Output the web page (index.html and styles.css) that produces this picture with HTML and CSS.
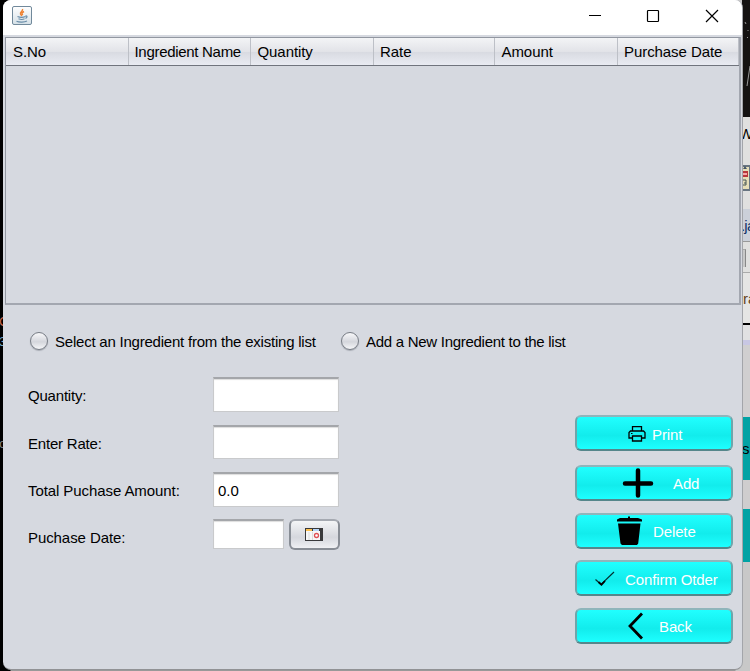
FILE: index.html
```
<!DOCTYPE html>
<html lang="en">
<head>
<meta charset="utf-8">
<title>Ingredient purchases</title>
<link rel="stylesheet" href="styles.css">
</head>
<body>
<div class="desktop">
  <div class="left-edge"><span class="edge-red">C</span><span class="edge-blue">3</span><span class="edge-gray">o</span></div>
  <main class="window">
    <header class="titlebar">
      <svg class="java" width="20" height="20" viewBox="0 0 20 20">
        <defs><linearGradient id="tile" x1="0" y1="0" x2="0" y2="1"><stop offset="0" stop-color="#fff"/><stop offset="1" stop-color="#d5e0e7"/></linearGradient></defs>
        <rect x=".5" y=".5" width="19" height="18" rx="1.5" fill="url(#tile)" stroke="#71899b"/>
        <path d="M10.500 3c1 2-3 3-2 5 .4 1 1 1.500 1.500 2M12 5.500c-3 1.500-2 2-1.300 3.500" fill="none" stroke="#ee8130" stroke-width="1.400"/>
        <path d="M5.500 10.500c2 .8 6 .8 8 0M6.500 12.800c2 .8 4.500.8 6 0M4.500 15.300c3 1.300 8 1 10.500-.3M13.500 10c2-.3 2 1.500 0 2.500" fill="none" stroke="#6b8ea9" stroke-width="1.200"/>
      </svg>
      <div class="controls">
        <svg width="14" height="14" viewBox="0 0 14 14"><path d="M1 9.500h12" stroke="#000"/></svg>
        <svg width="14" height="14" viewBox="0 0 14 14"><rect x=".5" y="4.500" width="11" height="11" rx=".8" fill="none" stroke="#000" stroke-width="1.200"/></svg>
        <svg width="14" height="14" viewBox="0 0 14 14"><path d="M1 4l12 12M13 4L1 16" stroke="#000" stroke-width="1.200"/></svg>
      </div>
    </header>
    <section class="table">
      <div class="thead"><div>S.No</div><div class="tight">Ingredient Name</div><div>Quantity</div><div class="pull">Rate</div><div>Amount</div><div class="pull">Purchase Date</div></div>
    </section>
    <section class="choices">
      <div class="choice first"><i class="radio"></i><span>Select an Ingredient from the existing list</span></div>
      <div class="choice second"><i class="radio"></i><span>Add a New Ingredient to the list</span></div>
    </section>
    <section class="lower">
      <div class="form">
        <div class="row"><label class="snug">Quantity:</label><div class="field"></div></div>
        <div class="row"><label class="snug">Enter Rate:</label><div class="field"></div></div>
        <div class="row"><label>Total Puchase Amount:</label><div class="field">0.0</div></div>
        <div class="row date"><label>Puchase Date:</label><div class="field short"></div>
          <div class="picker">
            <svg width="18" height="13" viewBox="0 0 18 13"><path fill="#39393b" d="M0 0h18v13H0z"/><path fill="#f7f7f7" d="M1 3h14v9H1z"/><path fill="#ffc14d" d="M1 1h6v2H1z"/><path fill="#b7d6fa" d="M8 1h6v2H8z"/><path d="M4 4v8M7.500 4v8" stroke="#ddd"/><circle cx="11.500" cy="7.500" r="2" fill="#fff" stroke="#df5054" stroke-width="1.300"/></svg>
          </div>
        </div>
      </div>
      <div class="actions">
        <div class="btn print"><svg width="18" height="16" viewBox="0 0 18 16"><path d="M4.500 5V.7h9V5M4 12H1V6.500L2.500 5h13L17 6.500V12h-3M4.500 10h9v5h-9z" fill="none" stroke="#000" stroke-width="1.300"/><path d="M3 7.500h1.500" stroke="#000"/></svg><span>Print</span></div>
        <div class="btn add"><svg width="30" height="30" viewBox="0 0 30 30"><path d="M15 2.500v25M2 15.500h26" stroke="#000" stroke-width="4.500" stroke-linecap="round"/></svg><span>Add</span></div>
        <div class="btn delete"><svg width="25" height="30" viewBox="0 0 25 30"><path d="M0 5.500V3.500l3-1.500h8V.5h2V2h8l4 1.500v2zM1 7.500h22.500l-2.300 20-1.200 1.500H5l-1.500-1.500z"/></svg><span>Delete</span></div>
        <div class="btn confirm"><svg width="20" height="16" viewBox="0 0 20 16"><path d="M.5 9.500l5.500 5L19 2" fill="none" stroke="#033" stroke-width="1.200"/><path d="M3.500 12l3 2.700L10 11" fill="none" stroke="#000" stroke-width="1.800"/></svg><span>Confirm Otder</span></div>
        <div class="btn back"><svg width="16" height="28" viewBox="0 0 16 28"><path d="M14 1.500L2 14l12 12.500" fill="none" stroke="#000" stroke-width="2.800"/></svg><span>Back</span></div>
      </div>
    </section>
  </main>
  <aside class="right-edge">
    <div class="dark"><svg width="8" height="117" viewBox="0 0 8 117"><path d="M5 86L8 66M3 22l1 2M6 30v1M5 37l1 1" stroke="#999" fill="none"/></svg></div>
    <div class="toolbar"><span>W</span><svg width="8" height="26" viewBox="0 0 8 26"><path fill="#697581" d="M0 0h8v26H0z"/><path fill="#e6deb8" d="M0 2h7v22H0z"/><path fill="#456" d="M1 4l2-3 2 3z"/><path fill="#b8363b" d="M0 6h6v6H0z"/><path fill="#f6a7a7" d="M0 8h5v2H0z"/><path d="M1 15h3v5H1m1-2h2" fill="none" stroke="#455"/></svg></div>
    <div class="tab">.ja</div>
    <div class="ruler"><i></i></div>
    <div class="code">ra</div>
    <div class="black-line"></div>
    <div class="pale"></div>
    <div class="lavender"></div>
    <div class="gray-a"></div>
    <div class="teal-a">s</div>
    <div class="gray-b"></div>
    <div class="teal-b"></div>
    <div class="gray-c"></div>
  </aside>
</div>
</body>
</html>
```

FILE: styles.css
```
* { box-sizing: border-box; }
body { margin: 0; font: 15px "Liberation Sans", Arial, sans-serif; color: #000; }
svg { display: block; flex: none; overflow: visible; }
.desktop { width: 750px; height: 671px; display: flex; overflow: hidden; background: linear-gradient(90deg, #000 10px, #999 11px, #999 735px, #c8c8c8 736px); }
.left-edge { width: 3px; background: #000; overflow: hidden; display: flex; flex-direction: column; padding-top: 314px; font-size: 13px; line-height: 16px; }
.left-edge span { margin-left: -1px; }
.edge-red { color: #c86a50; }
.edge-blue { color: #6fa3c4; margin-top: 4px; }
.edge-gray { color: #888; margin-top: 86px; }
.window { width: 740px; height: 670px; background: #d6d9e0; border-radius: 8px; border-right: 1px solid #a3a5aa; border-bottom: 1px solid #919295; overflow: hidden; z-index: 1; flex: none; }
.titlebar { height: 35px; background: #fff; display: flex; justify-content: space-between; padding: 6px 23px 0 9px; }
.controls { display: flex; gap: 44.500px; }
.table { width: 736px; height: 268px; margin: 2px 0 0 2px; border: 1px solid #9297a1; border-right-width: 2px; border-bottom-width: 2px; border-right-color: #a3a7b0; border-bottom-color: #a3a7b0; }
.thead { height: 28px; display: grid; grid-template-columns: 123px 122px 123px 121px 123px 1fr; border-bottom: 1px solid #70747d; background: linear-gradient(#f3f4f6, #e2e3e8 50%, #d8dae1 51%, #e9ebf2); letter-spacing: -.07px; }
.thead div { padding: 0 0 0 6.500px; line-height: 27px; white-space: nowrap; border-right: 1px solid #bdc0c7; }
.thead div:first-child { padding-left: 7px; }
.thead .tight { padding-left: 5.500px; letter-spacing: -.3px; }
.thead .pull { padding-left: 6px; }
.choices { display: flex; padding: 27px 0 0 27px; height: 72px; }
.choice { display: flex; align-items: flex-start; white-space: nowrap; line-height: 19px; }
.choice.first { width: 311px; letter-spacing: -.22px; }
.choice.second { letter-spacing: -.28px; }
.choice span { margin-left: 7px; }
.radio { width: 18px; height: 18px; border-radius: 50%; border: 1px solid #777c85; background: linear-gradient(#f8f8fa, #d4d6dc 55%, #f5f6f8); box-shadow: 0 1px 1px #a7abb3; }
.lower { display: flex; }
.form { width: 572px; padding: 0 0 0 25px; display: grid; grid-template-rows: repeat(4, 47.500px); align-content: start; }
.row { display: flex; align-items: flex-start; }
.row label { width: 185px; line-height: 38px; white-space: nowrap; letter-spacing: -.08px; }
.row .snug { letter-spacing: -.2px; }
.row.date { margin-top: -.6px; }
.field { width: 126px; height: 34.500px; background: #fff; border: 1px solid #c9cacc; border-top: 2px solid #a4a6aa; box-shadow: inset 0 1px 1px #ddd; line-height: 34px; padding-left: 4px; }
.field.short { width: 71px; height: 30px; }
.picker { width: 51px; height: 31px; margin-left: 5px; border: 2px solid #888d95; border-top-color: #a5a9b1; border-radius: 6px; display: flex; align-items: center; justify-content: center; background: linear-gradient(#f4f5f7, #d5d7dd 60%, #eff0f3); }
.picker svg { margin-right: 2px; }
.actions { width: 158px; padding-top: 38px; display: flex; flex-direction: column; gap: 11.670px; }
.btn { height: 36px; border: 2px solid #6fa5aa; border-top-color: #8fb5bb; border-bottom-color: #55868b; border-radius: 6px; background: linear-gradient(#20ffff, #12ecec 58%, #1dffff); color: #fff; display: flex; align-items: center; line-height: 34px; white-space: nowrap; letter-spacing: -.12px; }
.btn span { padding-top: 2px; }
.btn.print { margin-bottom: 2.330px; padding-left: 51px; gap: 6px; }
.btn.print svg { margin-top: 2px; }
.btn.print span { padding-top: 3px; }
.btn.add { padding-left: 46px; gap: 20px; }
.btn.delete { padding-left: 40px; gap: 11px; }
.btn.confirm { padding-left: 18px; gap: 10px; }
.btn.confirm span { padding-top: 4px; }
.btn.back { padding-left: 51px; gap: 15px; }
.btn.back span { padding-top: 3px; }
.right-edge { width: 8px; margin-left: -1px; overflow: hidden; flex: none; }
.dark { height: 117px; background: #151312; overflow: hidden; }
.toolbar { height: 92px; background: #e0e0df; overflow: hidden; padding-top: 8px; }
.toolbar span { display: block; line-height: 18px; height: 40px; margin-left: -3px; }
.tab { height: 33px; background: #cbd0d9; line-height: 34px; white-space: nowrap; border-bottom: 1px solid #999; color: #136; text-indent: -1px; letter-spacing: -.8px; }
.ruler { height: 31px; background: #e0e0df; border-bottom: 1px solid #aaa; padding-top: 7px; }
.ruler i { display: block; width: 4px; height: 18px; background: #c8c8c8; border-right: 1px solid #888; border-top: 1px solid #aaa; }
.code { height: 50px; background: #e5e5e4; line-height: 52px; white-space: nowrap; color: #642; padding-left: 1px; }
.black-line { height: 2px; background: #000; }
.pale { height: 15px; background: #e1e1e2; }
.lavender { height: 5px; background: #c8c7e3; }
.gray-a { height: 72px; background: #d0cfd0; }
.teal-a { height: 63px; background: #00a2a4; line-height: 63px; }
.gray-b { height: 29px; background: #cfcdce; }
.teal-b { height: 53px; background: #00a2a4; }
.gray-c { height: 109px; background: #c8c8c8; }
```
